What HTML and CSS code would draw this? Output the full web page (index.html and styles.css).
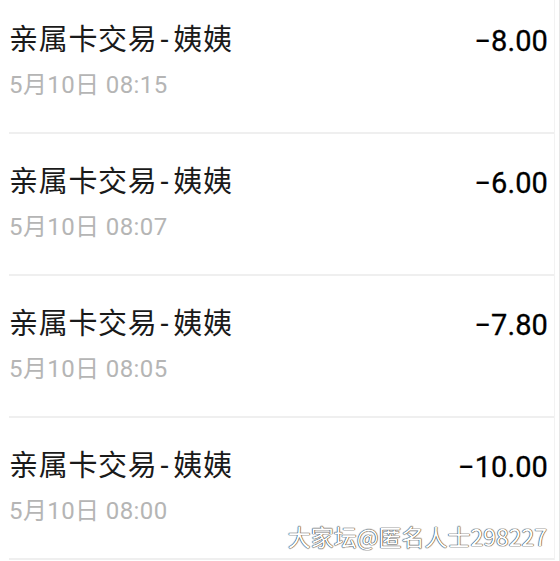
FILE: index.html
```html
<!DOCTYPE html>
<html lang="zh-CN">
<head>
  <meta charset="UTF-8" />
  <meta name="viewport" content="width=device-width, initial-scale=1.0"/>
  <title>亲属卡交易</title>
  <link rel="stylesheet" href="styles.css">
</head>
<body>
  <div class="list">
    <div class="row">
      <div class="top">
        <span class="title">亲属卡交易<span class="dash">-</span>姨姨</span>
        <span class="amount">−8.00</span>
      </div>
      <div class="date">5月10日 08:15</div>
    </div>
    <div class="row">
      <div class="top">
        <span class="title">亲属卡交易<span class="dash">-</span>姨姨</span>
        <span class="amount">−6.00</span>
      </div>
      <div class="date">5月10日 08:07</div>
    </div>
    <div class="row">
      <div class="top">
        <span class="title">亲属卡交易<span class="dash">-</span>姨姨</span>
        <span class="amount">−7.80</span>
      </div>
      <div class="date">5月10日 08:05</div>
    </div>
    <div class="row">
      <div class="top">
        <span class="title">亲属卡交易<span class="dash">-</span>姨姨</span>
        <span class="amount">−10.00</span>
      </div>
      <div class="date">5月10日 08:00</div>
    </div>
  </div>

  <div class="watermark">大家坛@匿名人士298227</div>
</body>
</html>
```

FILE: styles.css
```css
html {
  background: #fff;
}
body {
  margin: 0;
  height: 561px;
  overflow: hidden;
  position: relative;
  font-family: Roboto, "Noto Sans CJK SC", sans-serif;
  border-right: 1px solid #e6e6e6;
}
.list {
  margin-top: -8px;
  margin-right: 4px;
  border-right: 1px solid #f2f2f2;
}
.row {
  margin-left: 9px;
  padding: 26px 6px 0 0;
  height: 114px;
  border-bottom: 2px solid #efefef;
}
.top {
  display: flex;
  justify-content: space-between;
  align-items: center;
  height: 40px;
}
.title {
  font-family: "Noto Sans CJK SC", sans-serif;
  font-size: 29px;
  letter-spacing: 0.7px;
  color: #1a1a1a;
  line-height: 40px;
}
.dash {
  font-family: Roboto, sans-serif;
  margin: 0 4px 0 3px;
}
.amount {
  margin-top: 6px;
  font-size: 29px;
  letter-spacing: 0.1px;
  color: #000;
  line-height: 40px;
  -webkit-text-stroke: 0.3px #000;
}
.date {
  margin-top: 12px;
  font-size: 24px;
  letter-spacing: 0.4px;
  line-height: 30px;
  color: #b5b5b5;
}
.watermark {
  position: absolute;
  right: 12px;
  bottom: 11px;
  font-family: "Noto Sans CJK SC", sans-serif;
  font-size: 23px;
  line-height: 28px;
  color: #fff;
  text-shadow: 0 0 1px #333, 0 0 1px #333, 0 0 1px #555;
}
```
